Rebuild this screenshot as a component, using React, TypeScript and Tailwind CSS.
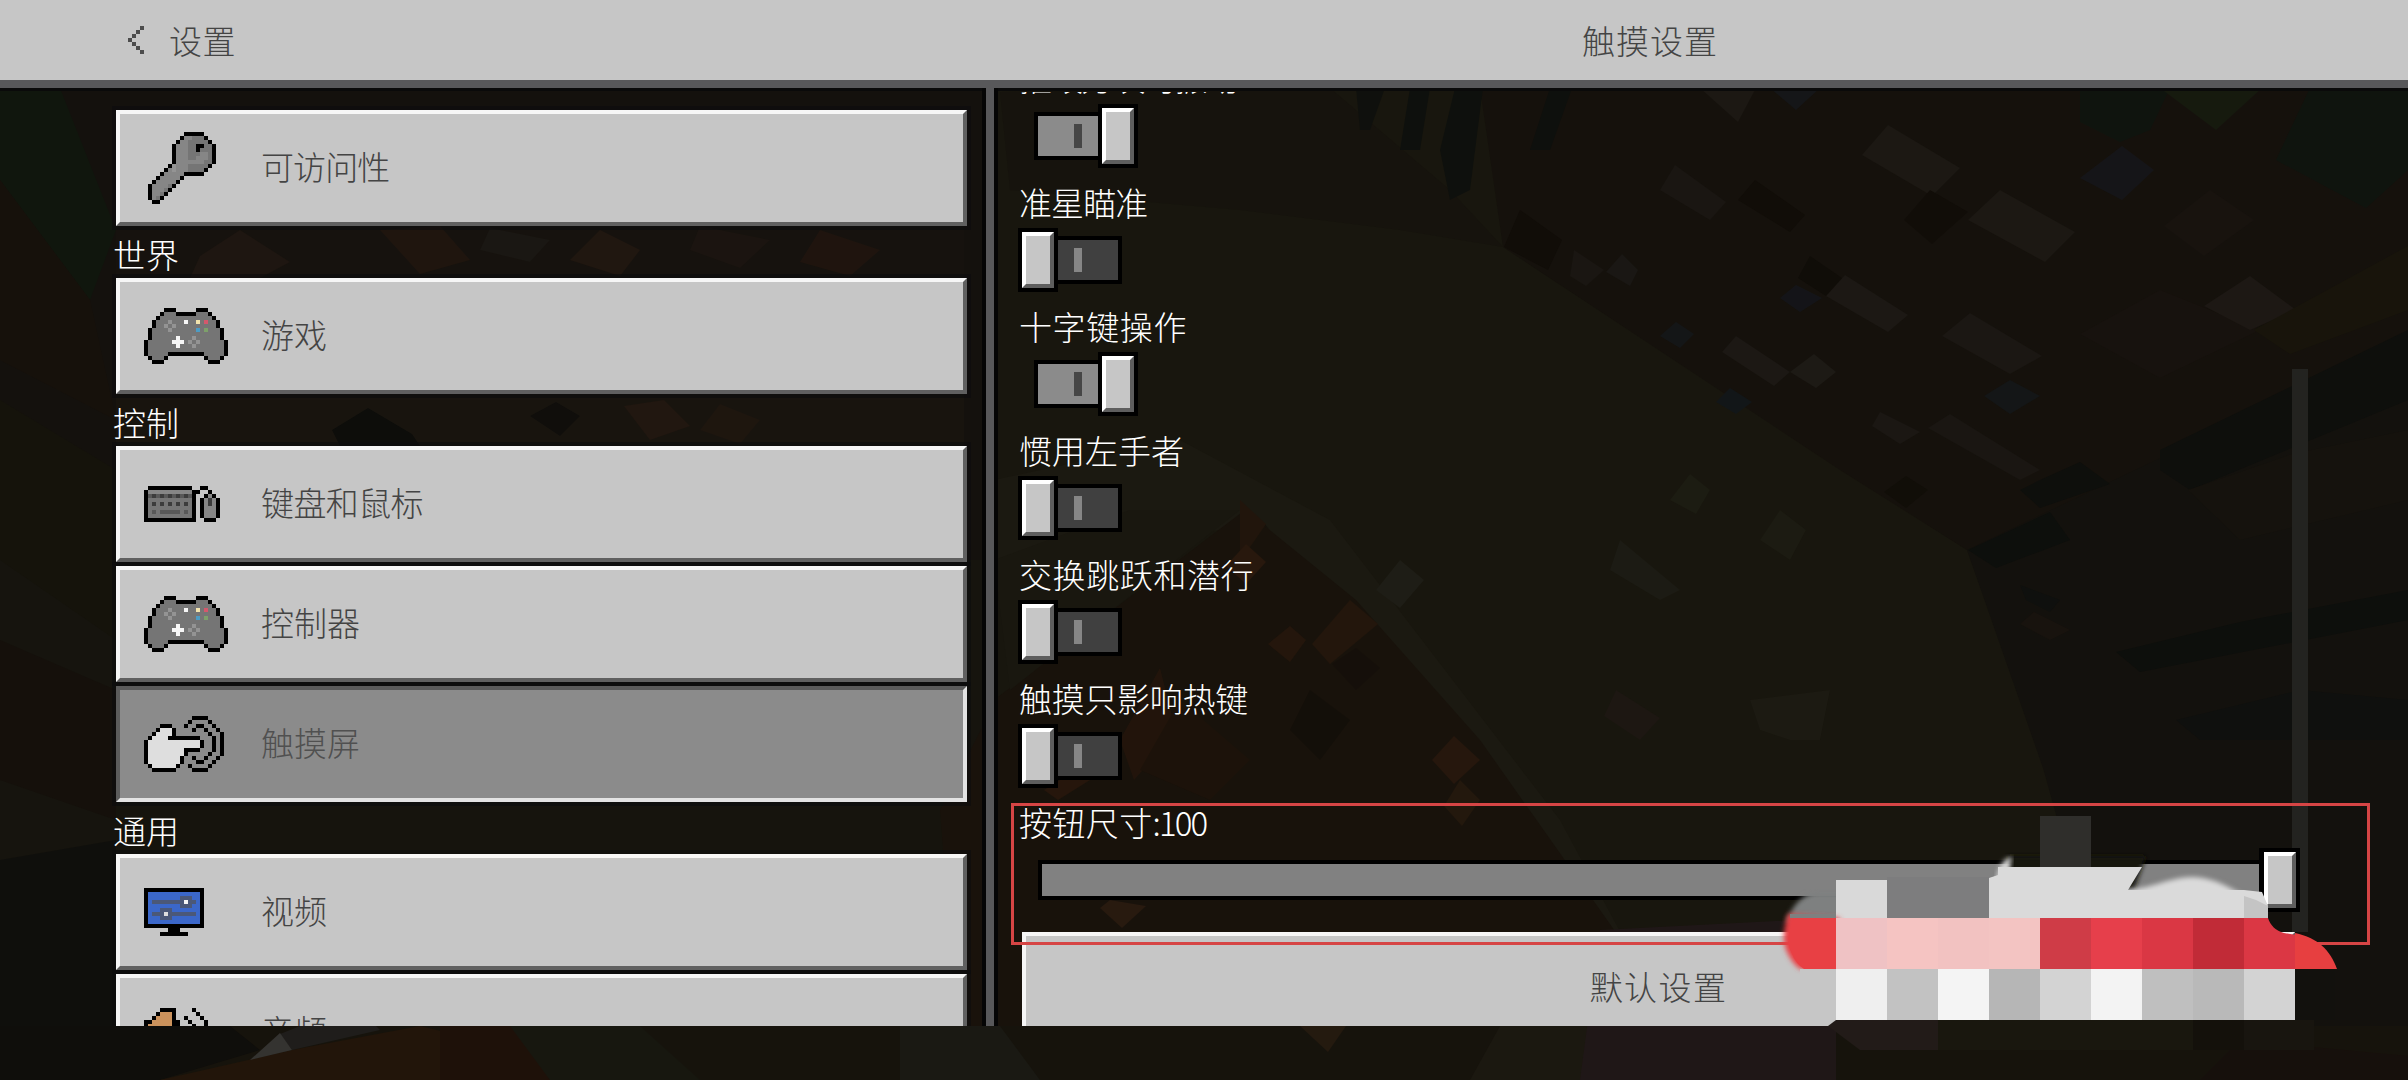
import { ReactNode } from "react";
import clsx from "clsx";

const palette: Record<string, string> = {
  "#": "#000000",
  g: "#757575",
  h: "#868686",
  l: "#949494",
  w: "#f6f6f6",
  y: "#f2e3ad",
  r: "#d4586c",
  b: "#4d9cc4",
  n: "#7da06a",
  d: "#3c3c3c",
  k: "#585858",
  p: "#dedede",
  s: "#3b67c9",
  t: "#4b5878",
  o: "#cb925c",
};

const sprites: Record<string, string[]> = {
  back: ["...#", "..#.", ".#..", "#...", ".#..", "..#.", "...#"],
  key: [
    ".........#####...",
    "........#hhggg#..",
    ".......#hhggggg#.",
    "......#hhhgg##gg#",
    "......#hhhgg#ggg#",
    "......#hhhggghhg#",
    "......#hhhgghhhg#",
    "......#hhhhhhhgg#",
    ".....#lhhhggggg#.",
    "....#hlhhhgggg#..",
    "...#hhhhh#####...",
    "..#hhhhh#........",
    ".#hhhhh#.........",
    "#hhhhg#..........",
    "#hhhg#...........",
    "#hhg#............",
    "#hg#.............",
    ".##..............",
  ],
  gamepad: [
    ".....###.....###.....",
    "....#ggg#####ggg#....",
    "...#ggggggggggggg#...",
    "..#ggglgggwggygrgg#..",
    "..#gglglgggggggggg#..",
    ".#gggglggggggbgnggg#.",
    ".#ggggggggggggggggg#.",
    ".#ggggggwggglgggggg#.",
    "#ggggggwwwglglgggggg#",
    "#gggggggwggglggggggg#",
    "#ggggggggggggggggggg#",
    "#ggggg#########ggggg#",
    ".#ggg#.........#ggg#.",
    "..###...........###..",
  ],
  keyboard: [
    ".###########..##...",
    "#hhhhhhhhhhh##..#..",
    "#kdkdkdkdkdk#..#h#.",
    "#ggggggggggg#.#hdh#",
    "#gdgdgdgdgdg#.#hdh#",
    "#ggggggggggg#.#hhh#",
    "#gkgkkkkkgkg#.#hhh#",
    "#ggggggggggg#.#hhh#",
    "#############..###.",
  ],
  touch: [
    "............####....",
    "...........#....#...",
    "....###...#..##..#..",
    "...#ppp#....#..#..#.",
    "..#pppp#........#..#",
    ".#pppp########...#.#",
    "#ppppppppppppp#..#.#",
    "#ppppppppppppp#..#.#",
    "#ppppppppp####...#.#",
    "#ppppppppp#.....#..#",
    "#pppppppp#..#..#..#.",
    "#pppppppp#...##..#..",
    ".#pppppp#..#....#...",
    "..######....####....",
  ],
  monitor: [
    "###############",
    "#sssssssssssss#",
    "#sssssssstttss#",
    "#sttttttttwtts#",
    "#sssssssstttss#",
    "#ssstttsssssss#",
    "#stttpttttttts#",
    "#ssstttsssssss#",
    "#sssssssssssss#",
    "###############",
    "......###......",
    "....#######....",
  ],
  speaker: [
    "....####....#...",
    "...#ooo#.....#..",
    "..#oooo#..#...#.",
    "##ooooo##..#...#",
    "#oooooo##...#..#",
  ],
};

function Sprite({ name, color }: { name: string; color?: string }) {
  const rows = sprites[name];
  const w = Math.max(...rows.map((r) => r.length));
  return (
    <svg
      width={w * 4}
      height={rows.length * 4}
      viewBox={`0 0 ${w} ${rows.length}`}
      shapeRendering="crispEdges"
      className="shrink-0"
    >
      {rows.flatMap((row, y) =>
        [...row].map((c, x) =>
          c === "." ? null : <rect key={`${x}-${y}`} x={x} y={y} width={1} height={1} fill={color ?? palette[c]} />
        )
      )}
    </svg>
  );
}

// blocky terrain behind the menu: [points, fill]
const terrain: [string, string][] = [
  ["0,88 986,88 986,560 0,560", "#14110d"],
  ["0,88 60,88 116,230 90,300 0,180", "#10170d"],
  ["0,180 90,300 116,420 0,360", "#17110b"],
  ["0,400 116,470 116,640 0,560", "#15130b"],
  ["0,640 116,690 116,820 0,780", "#15100b"],
  ["0,860 116,840 116,1080 0,1080", "#0f0f0c"],
  ["994,88 1500,88 1503,247 1967,550 2060,800 2100,1080 1700,1080 1265,524 994,700", "#19170e"],
  ["1000,92 1330,88 1450,190 1503,247 1400,230 1240,210 1010,190", "#16130d"],
  ["1480,88 2408,88 2408,380 2040,520 1967,550 1840,470 1503,247", "#15110c"],
  ["1967,550 2408,340 2408,1080 2130,1080 2043,768", "#13110d"],
  ["994,480 1180,440 1330,520 1560,820 1700,1080 1600,960 1265,524 994,560", "#1c1a12"],
  ["994,700 1245,510 1356,600 1480,740 1720,1080 994,1080", "#19120b"],
  ["994,560 1130,510 1240,510 1010,690", "#1a1810"],
  ["1356,88 1385,88 1370,130 1360,130", "#0f100d"],
  ["1410,88 1430,88 1420,150 1400,150", "#0e100d"],
  ["1455,88 1483,88 1470,190 1450,200 1440,150", "#0e100d"],
  ["1550,88 1572,88 1550,150 1530,150", "#0e100d"],
  ["1888,125 1960,168 1932,196 1862,155", "#1d1914"],
  ["2000,190 2075,232 2045,262 1968,220", "#1d1914"],
  ["1930,190 1968,212 1932,244 1904,220", "#110d08"],
  ["1675,165 1726,202 1710,220 1660,190", "#1b1713"],
  ["1755,180 1805,215 1790,232 1738,200", "#110d08"],
  ["1845,275 1908,315 1888,332 1826,296", "#1d1915"],
  ["1970,313 2042,356 2010,374 1942,336", "#1c1814"],
  ["1810,256 1842,278 1826,296 1798,278", "#100d08"],
  ["1736,336 1790,372 1774,386 1722,352", "#1d1915"],
  ["1814,354 1836,372 1816,388 1790,372", "#1e1b16"],
  ["1504,247 1520,210 1562,240 1548,270", "#110d08"],
  ["1574,250 1604,270 1586,286 1570,276", "#1b1713"],
  ["1622,254 1638,270 1630,286 1606,272", "#1b1815"],
  ["1880,412 1920,432 1900,444 1872,426", "#1c1814"],
  ["1950,414 2040,470 2020,480 1928,428", "#1b1713"],
  ["1906,476 1928,490 1906,508 1884,492", "#110e08"],
  ["2122,146 2154,170 2122,200 2080,178", "#15161a"],
  ["1796,285 1822,298 1800,312 1780,298", "#14151a"],
  ["1676,322 1694,334 1680,348 1660,336", "#141719"],
  ["2010,380 2040,396 2010,414 1984,396", "#141718"],
  ["1730,388 1752,402 1736,414 1716,402", "#12171a"],
  ["1770,88 1820,88 1796,110", "#15171a"],
  ["1700,88 1756,88 1738,122", "#1d1914"],
  ["2080,88 2170,88 2150,130 2120,142 2080,122", "#0f150f"],
  ["2160,88 2262,88 2216,130", "#161b0f"],
  ["2310,88 2408,88 2408,170 2366,208 2276,160", "#0f150f"],
  ["2210,190 2254,220 2204,256 2164,226", "#19130f"],
  ["2080,334 2160,290 2260,330 2160,378", "#18120e"],
  ["2250,276 2296,310 2250,330 2204,306", "#1e1915"],
  ["2254,330 2408,246 2408,310 2290,354", "#19150b"],
  ["2160,450 2408,330 2408,400 2190,490 2160,470", "#0e0f0c"],
  ["2040,480 2080,462 2110,484 2040,508 2020,490", "#0e0f0c"],
  ["1968,550 2050,512 2070,540 1996,568", "#0d0f0c"],
  ["2188,490 2292,454 2408,430 2408,500 2240,540", "#15120d"],
  ["2116,652 2240,622 2408,590 2408,620 2140,672", "#0d0f0c"],
  ["2176,720 2300,690 2408,700 2408,740 2200,740", "#0f100e"],
  ["2020,585 2060,600 2050,612 2026,600", "#0f100e"],
  ["2034,612 2070,630 2050,640 2020,624", "#19130e"],
  ["1240,500 1266,524 1248,550 1240,560", "#23160c"],
  ["1246,544 1266,562 1246,584 1226,566", "#2a190d"],
  ["1290,626 1306,640 1290,662 1268,644", "#26170c"],
  ["1350,600 1378,624 1330,664 1312,644", "#25170c"],
  ["1356,648 1380,668 1356,690 1332,664", "#150f0a"],
  ["1160,668 1176,732 1134,780 1120,740", "#24150b"],
  ["1454,736 1480,760 1454,784 1432,760", "#28180d"],
  ["1180,700 1250,760 1210,800 1140,770", "#1d120a"],
  ["1310,690 1350,720 1320,760 1290,730", "#130f09"],
  ["1066,776 1090,780 1058,800 1044,790", "#28170c"],
  ["1110,900 1146,906 1122,928 1100,908", "#2a1b10"],
  ["1460,780 1480,800 1462,826 1444,806", "#25190d"],
  ["1616,690 1660,718 1640,740 1604,716", "#1e1813"],
  ["1400,560 1424,580 1400,608 1376,590", "#1f1e17"],
  ["1690,474 1710,490 1696,514 1670,500", "#1d1d13"],
  ["1780,510 1806,530 1790,560 1760,540", "#1d1c13"],
  ["1620,540 1680,590 1660,600 1610,570", "#1d1c15"],
  ["1750,700 1830,690 1820,740 1790,740 1760,730", "#1d1b13"],
  ["116,226 964,226 964,278 116,278", "#17120e"],
  ["200,256 240,230 290,262 260,278 190,278", "#1f1712"],
  ["380,230 440,226 470,260 420,274", "#20160e"],
  ["490,228 550,240 530,262 480,250", "#1b1814"],
  ["600,230 640,250 620,276 570,260", "#221811"],
  ["700,226 770,240 740,268 690,250", "#1c1511"],
  ["820,230 880,250 850,276 800,262", "#20150e"],
  ["116,394 964,394 964,446 116,446", "#19150f"],
  ["332,430 368,408 412,434 420,446 340,446", "#0d0d0a"],
  ["530,416 556,402 580,416 560,436", "#100e0b"],
  ["624,406 664,400 690,426 650,440", "#231811"],
  ["720,404 760,420 740,444 700,430", "#1f170f"],
  ["116,802 964,802 964,854 116,854", "#16150d"],
  ["940,810 986,720 986,1080 960,1080", "#1a120b"],
  ["0,1026 2408,1026 2408,1080 0,1080", "#17130c"],
  ["0,1026 230,1026 260,1050 160,1080 0,1080", "#0f0e0b"],
  ["160,1080 292,1050 420,1026 520,1050 540,1080", "#24160a"],
  ["440,1026 520,1026 550,1080 440,1080", "#1f1109"],
  ["510,1026 640,1026 700,1080 550,1080", "#181810"],
  ["280,1034 300,1026 376,1026 380,1030 292,1050", "#201f1d"],
  ["250,1060 280,1033 292,1050", "#383734"],
  ["900,1026 1000,1026 1040,1080 900,1080", "#1b1a14"],
  ["1300,1026 1346,1026 1328,1052", "#261b10"],
  ["1470,1080 1500,1026 1720,1026 1740,1080", "#1c1911"],
  ["1600,930 1836,918 1836,1080 1580,1080", "#201818"],
  ["2240,1040 2408,1056 2408,1080 2200,1080", "#17100c"],
];

function Terrain() {
  return (
    <svg className="absolute inset-0 opacity-90" width={2408} height={1080} viewBox="0 0 2408 1080">
      {terrain.map(([points, fill], i) => (
        <polygon key={i} points={points} fill={fill} />
      ))}
    </svg>
  );
}

type Item = { icon: string; label: string; tracking?: string; pad?: string; active?: boolean };

const sections: { title?: string; items: Item[] }[] = [
  { items: [{ icon: "key", label: "可访问性", tracking: "tracking-[-0.9px]", pad: "pl-7 pt-[18px]" }] },
  { title: "世界", items: [{ icon: "gamepad", label: "游戏", pad: "pl-6 pt-[26px]" }] },
  {
    title: "控制",
    items: [
      { icon: "keyboard", label: "键盘和鼠标", tracking: "tracking-[-0.6px]", pad: "pl-6 pt-9" },
      { icon: "gamepad", label: "控制器", pad: "pl-6 pt-[26px]" },
      { icon: "touch", label: "触摸屏", pad: "pl-6 pt-[26px]", active: true },
    ],
  },
  {
    title: "通用",
    items: [
      { icon: "monitor", label: "视频", pad: "pl-6 pt-[30px]" },
      { icon: "speaker", label: "音频", pad: "pl-6 pt-[30px]" },
    ],
  },
];

function NavButton({ icon, label, tracking, pad, active }: Item) {
  return (
    <button
      className={clsx(
        "flex h-[116px] w-[851px] shrink-0 items-start border-4 text-left shadow-[0_0_0_4px_rgba(12,12,13,0.6)]",
        active
          ? "border-b-[#e3e3e3] border-r-[#e3e3e3] border-l-[#5b5b5b] border-t-[#5b5b5b] bg-[#8b8b8b] text-[#505050]"
          : "border-b-[#606060] border-r-[#606060] border-l-[#f6f6f6] border-t-[#f6f6f6] bg-[#c6c6c6] text-[#444444]"
      )}
    >
      <span className={clsx("h-[108px] w-[141px] shrink-0", pad)}>
        <Sprite name={icon} />
      </span>
      <span className={clsx("mt-9 h-8 leading-8", tracking)}>{label}</span>
    </button>
  );
}

function Knob({ className }: { className?: string }) {
  return (
    <div
      className={clsx(
        "h-14 w-8 shrink-0 border-4 border-b-[#5e5e5e] border-l-white border-r-[#5e5e5e] border-t-white bg-[#c6c6c6] shadow-[0_0_0_4px_#000]",
        className
      )}
    />
  );
}

function Toggle({ on }: { on: boolean }) {
  if (on) {
    return (
      <div className="flex h-16 items-center pl-[18px]">
        <div className="flex h-12 w-16 items-center border-4 border-r-0 border-black bg-[#8b8b8b] pl-9">
          <div className="h-6 w-2 bg-[#464646]" />
        </div>
        <Knob className="ml-1" />
      </div>
    );
  }
  return (
    <div className="flex h-16 items-center pl-[6px]">
      <Knob />
      <div className="ml-1 flex h-12 w-16 items-center border-4 border-l-0 border-black bg-[#404040] pl-4">
        <div className="h-6 w-2 bg-[#868686]" />
      </div>
    </div>
  );
}

const toggles = [
  { label: "摧毁方块时振动", on: true, text: "leading-[26px] tracking-[-1.9px]" },
  { label: "准星瞄准", on: false, text: "leading-7 tracking-[-0.9px]" },
  { label: "十字键操作", on: true, text: "leading-7 tracking-[0.6px]" },
  { label: "惯用左手者", on: false, text: "leading-7" },
  { label: "交换跳跃和潜行", on: false, text: "leading-7 tracking-[0.6px]" },
  { label: "触摸只影响热键", on: false, text: "leading-7 tracking-[-0.3px]" },
];

function Setting({ label, text, children }: { label: ReactNode; text: string; children: ReactNode }) {
  return (
    <div className="h-[124px] shrink-0">
      <div className={clsx("mb-2 h-8 whitespace-nowrap pl-[3px] text-white", text)}>{label}</div>
      {children}
    </div>
  );
}

// 51px censor tiles, left to right
const redTiles = ["#efc2c4", "#f5c4c2", "#f2c2c1", "#f3c4c2", "#cf3c47", "#e63f4b", "#da3744", "#c12b37"];
const grayTiles = ["#efefef", "#c2c2c2", "#f4f4f4", "#b6b6b6", "#d3d3d3", "#f3f3f3", "#bfbfbf", "#b9b9b9", "#d3d3d3"];

function Mosaic() {
  return (
    <svg className="absolute left-[1770px] top-[800px]" width={638} height={280} viewBox="1770 800 638 280">
      <defs>
        <filter id="soft" x="-10%" y="-10%" width="120%" height="120%">
          <feGaussianBlur stdDeviation="2.5" />
        </filter>
      </defs>
      <path d="M2008 856H2146L2134 890H2008Z" fill="#17150f" filter="url(#soft)" />
      <path d="M1786 922C1792 906 1802 894 1816 892H1846V922Z" fill="#7e8080" filter="url(#soft)" />
      <rect x={1836} y={880} width={51} height={38} fill="#d9d9d9" />
      <rect x={1887} y={877} width={102} height={41} fill="#7d7d7e" />
      <path d="M1996 882C1998 866 2004 858 2012 857L2006 882Z" fill="#d8d8d8" filter="url(#soft)" />
      <path d="M2120 918V890C2150 890 2165 878 2192 877C2218 878 2230 889 2246 896V918Z" fill="#dadada" filter="url(#soft)" />
      <path d="M1989 878L1998 875V867H2142L2128 890H2244L2262 892L2268 906V918H1989Z" fill="#dadada" />
      <path d="M2244 896L2256 900L2268 906V918H2244Z" fill="#c4c4c4" />
      <rect x={2040} y={816} width={51} height={51} fill="#2f2e2b" />
      <path d="M1788 914C1782 935 1783 944 1788 954Q1793 964 1800 969H1840V918Z" fill="#e84044" filter="url(#soft)" />
      <path d="M1794 918C1787 935 1787 944 1792 954Q1796 964 1804 969H1840V918Z" fill="#e84044" />
      <rect x={1790} y={914} width={46} height={4} fill="#7e8080" />
      <rect x={1800} y={969} width={36} height={6} fill="#c6c6c6" />
      {redTiles.map((fill, i) => (
        <rect key={i} x={1836 + i * 51} y={918} width={51} height={51} fill={fill} />
      ))}
      <path d="M2244 918H2268C2270 925 2276 931 2284 933L2296 935V969H2244Z" fill="#db3744" />
      <path d="M2295 933C2318 938 2330 950 2337 969H2295Z" fill="#e73f40" />
      {grayTiles.map((fill, i) => (
        <rect key={i} x={1836 + i * 51} y={969} width={51} height={51} fill={fill} />
      ))}
      <rect x={2295} y={969} width={40} height={51} fill="#12110d" />
      <path d="M1828 1026L1836 1020H1938V1050H1860Z" fill="#221b18" />
      <rect x={1938} y={1020} width={255} height={30} fill="#19170e" />
      <rect x={2193} y={1020} width={51} height={30} fill="#14110b" />
      <rect x={2244} y={1020} width={70} height={30} fill="#18150f" />
    </svg>
  );
}

export default function App() {
  return (
    <div className="relative flex h-[1080px] w-[2408px] flex-col overflow-hidden bg-[#16140e] font-['Noto_Sans_CJK_SC',sans-serif] text-[33px] font-light">
      <Terrain />

      <header className="relative flex h-[88px] shrink-0 border-b-8 border-[#58585a] bg-[#c6c6c6] text-[#444444] shadow-[0_3px_0_#0a0a0a]">
        <div className="flex w-[990px] pl-32">
          <div className="mt-[26px]">
            <Sprite name="back" color="#4c4c4c" />
          </div>
          <h1 className="ml-[25px] mt-6 h-8 leading-8 tracking-[0.5px]">设置</h1>
        </div>
        <h2 className="ml-[592px] mt-6 h-8 leading-8 tracking-[1px]">触摸设置</h2>
      </header>

      <main className="relative flex h-[938px]">
        <nav className="flex w-[986px] flex-col overflow-hidden pl-[116px] pt-[22px]">
          {sections.map((section, i) => (
            <section key={i} className="shrink-0">
              {section.title && (
                <h3 className="-ml-[3px] h-[52px] pt-3 leading-8 text-white">{section.title}</h3>
              )}
              <div className="flex flex-col gap-1">
                {section.items.map((item) => (
                  <NavButton key={item.label} {...item} />
                ))}
              </div>
            </section>
          ))}
        </nav>

        <div className="w-2 shrink-0 bg-[#58585a] shadow-[-4px_0_0_#050505,4px_0_0_#050505]" />

        <div className="mt-1 flex w-[1301px] shrink-0 flex-col overflow-hidden pl-[22px]">
          <div className="-mt-7 flex flex-col">
            {toggles.map((t) => (
              <Setting key={t.label} label={t.label} text={t.text}>
                <Toggle on={t.on} />
              </Setting>
            ))}
            <Setting
              label={
                <>
                  按钮尺寸<span className="tracking-[-1.9px]">:100</span>
                </>
              }
              text="leading-7 tracking-[0.4px]"
            >
              <div className="flex h-16 items-center pl-[22px]">
                <div className="h-10 w-[1222px] border-4 border-r-0 border-black bg-[#818181]" />
                <Knob className="ml-1" />
              </div>
            </Setting>
            <button className="ml-[6px] flex h-[116px] w-[1273px] shrink-0 items-start justify-center border-4 border-b-[#606060] border-l-[#f6f6f6] border-r-[#606060] border-t-[#f6f6f6] bg-[#c6c6c6] pt-[34px] leading-8 tracking-[1.4px] text-[#444444]">
              默认设置
            </button>
          </div>
        </div>
      </main>

      <div className="absolute left-[2292px] top-[369px] h-[563px] w-4 bg-[#232320]" />
      <div className="absolute left-[1011px] top-[803px] h-[142px] w-[1359px] border-[3px] border-[#d64545]" />
      <div className="absolute left-[2264px] top-[852px]">
        <Knob />
      </div>
      <Mosaic />
    </div>
  );
}
